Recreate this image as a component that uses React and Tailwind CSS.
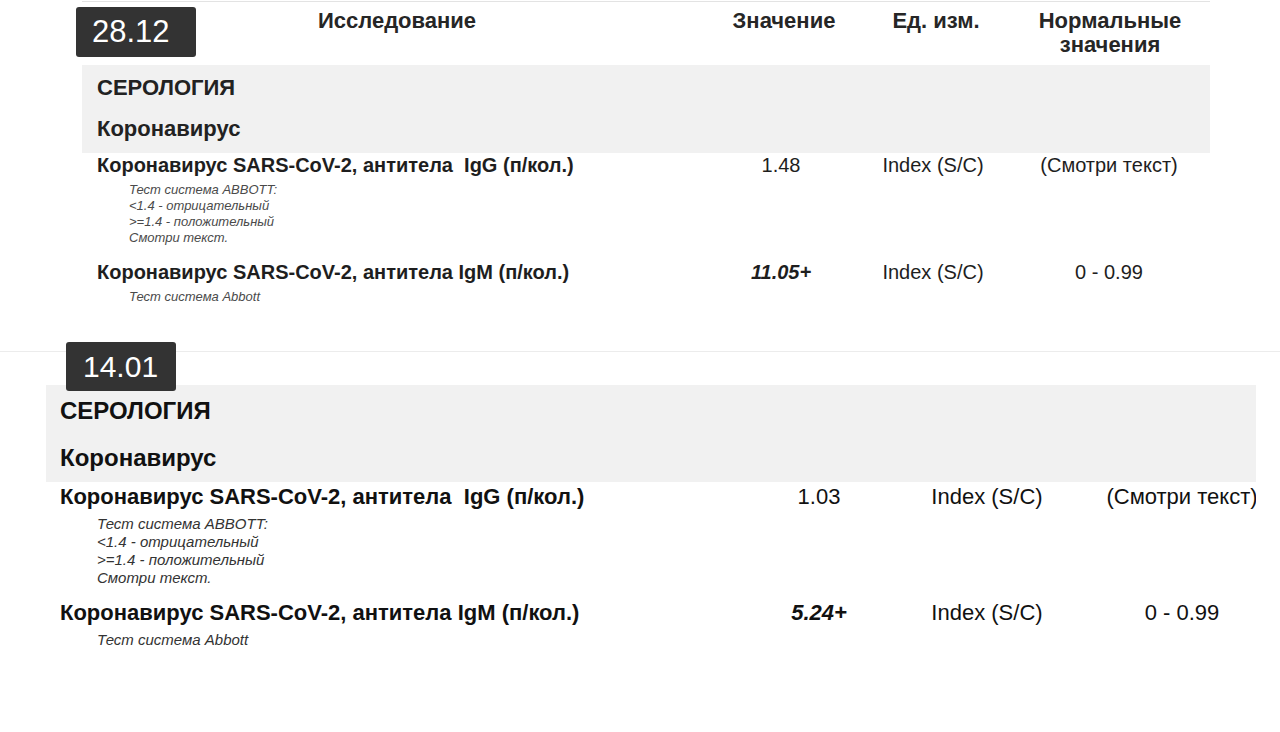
import React from "react";

const F = "font-['Liberation_Sans',Arial,Helvetica,sans-serif]";

function TopDoc() {
  return (
    <div className="h-[351px]">
      <div className="ml-[82px] w-[1128px] pt-[1px]">
        <div className="border-t border-[#e3e3e3]" />
        {/* header */}
        <div className="flex h-[63px] pt-[7px] text-[22px] leading-[24px] font-bold text-[#262626]">
          <div className="w-[630px] shrink-0 text-center">Исследование</div>
          <div className="w-[144px] shrink-0 text-center">Значение</div>
          <div className="w-[160px] shrink-0 text-center">Ед. изм.</div>
          <div className="w-[188px] shrink-0 text-center">
            Нормальные
            <br />
            значения
          </div>
        </div>
        {/* band */}
        <div className="bg-[#f1f1f1] h-[88px] pt-[10px] pl-[15px] text-[#222] font-bold text-[22px] leading-[26px]">
          <div>СЕРОЛОГИЯ</div>
          <div className="mt-[15px]">Коронавирус</div>
        </div>
        {/* row 1 */}
        <div className="flex text-[20px] leading-[24px] text-[#1e1e1e]">
          <div className="w-[630px] shrink-0 pl-[15px] font-bold whitespace-pre">Коронавирус SARS-CoV-2, антитела  IgG (п/кол.)</div>
          <div className="w-[138px] shrink-0 text-center">1.48</div>
          <div className="w-[166px] shrink-0 text-center">Index (S/C)</div>
          <div className="w-[186px] shrink-0 text-center">(Смотри текст)</div>
        </div>
        <div className="pl-[47px] mt-[5px] italic text-[13px] leading-[16px] text-[#4a4a4a]">
          <div>Тест система ABBOTT:</div>
          <div>&lt;1.4 - отрицательный</div>
          <div>&gt;=1.4 - положительный</div>
          <div>Смотри текст.</div>
        </div>
        {/* row 2 */}
        <div className="flex mt-[14px] text-[20px] leading-[24px] text-[#1e1e1e]">
          <div className="w-[630px] shrink-0 pl-[15px] font-bold">Коронавирус SARS-CoV-2, антитела IgM (п/кол.)</div>
          <div className="w-[138px] shrink-0 text-center font-bold italic">11.05+</div>
          <div className="w-[166px] shrink-0 text-center">Index (S/C)</div>
          <div className="w-[186px] shrink-0 text-center">0 - 0.99</div>
        </div>
        <div className="pl-[47px] mt-[5px] italic text-[13px] leading-[16px] text-[#4a4a4a]">
          <div>Тест система Abbott</div>
        </div>
      </div>
    </div>
  );
}

function BottomDoc() {
  return (
    <div className="border-t border-[#ececec]">
      <div className="ml-[46px] w-[1210px] overflow-hidden mt-[33px]">
        <div className="bg-[#f1f1f1] h-[97px] pt-[12px] pl-[14px] text-[#111] font-bold text-[24px] leading-[28px]">
          <div>СЕРОЛОГИЯ</div>
          <div className="mt-[19px]">Коронавирус</div>
        </div>
        <div className="flex mt-[2px] text-[22px] leading-[26px] text-[#111]">
          <div className="w-[693px] shrink-0 pl-[14px] font-bold whitespace-pre">Коронавирус SARS-CoV-2, антитела  IgG (п/кол.)</div>
          <div className="w-[160px] shrink-0 text-center">1.03</div>
          <div className="w-[176px] shrink-0 text-center">Index (S/C)</div>
          <div className="w-[214px] shrink-0 text-center whitespace-nowrap">(Смотри текст)</div>
        </div>
        <div className="pl-[51px] mt-[5px] italic text-[15px] leading-[18px] text-[#333]">
          <div>Тест система ABBOTT:</div>
          <div>&lt;1.4 - отрицательный</div>
          <div>&gt;=1.4 - положительный</div>
          <div>Смотри текст.</div>
        </div>
        <div className="flex mt-[13px] text-[22px] leading-[26px] text-[#111]">
          <div className="w-[693px] shrink-0 pl-[14px] font-bold">Коронавирус SARS-CoV-2, антитела IgM (п/кол.)</div>
          <div className="w-[160px] shrink-0 text-center font-bold italic">5.24+</div>
          <div className="w-[176px] shrink-0 text-center">Index (S/C)</div>
          <div className="w-[214px] shrink-0 text-center">0 - 0.99</div>
        </div>
        <div className="pl-[51px] mt-[5px] italic text-[15px] leading-[18px] text-[#333]">
          <div>Тест система Abbott</div>
        </div>
      </div>
    </div>
  );
}

export default function App() {
  return (
    <div className={`relative w-[1280px] h-[732px] overflow-hidden bg-white ${F}`}>
      <TopDoc />
      <BottomDoc />
      <div className="absolute left-[76px] top-[7px] w-[120px] h-[50px] rounded-[3px] bg-[#333333] text-white text-[31px] leading-[50px] pl-[16px] font-['Helvetica_Neue','Liberation_Sans',Arial,sans-serif]">
        28.12
      </div>
      <div className="absolute left-[66px] top-[342px] w-[110px] h-[49px] rounded-[3px] bg-[#333333] text-white text-[30px] leading-[49px] pl-[17px] font-['Helvetica_Neue','Liberation_Sans',Arial,sans-serif]">
        14.01
      </div>
    </div>
  );
}
